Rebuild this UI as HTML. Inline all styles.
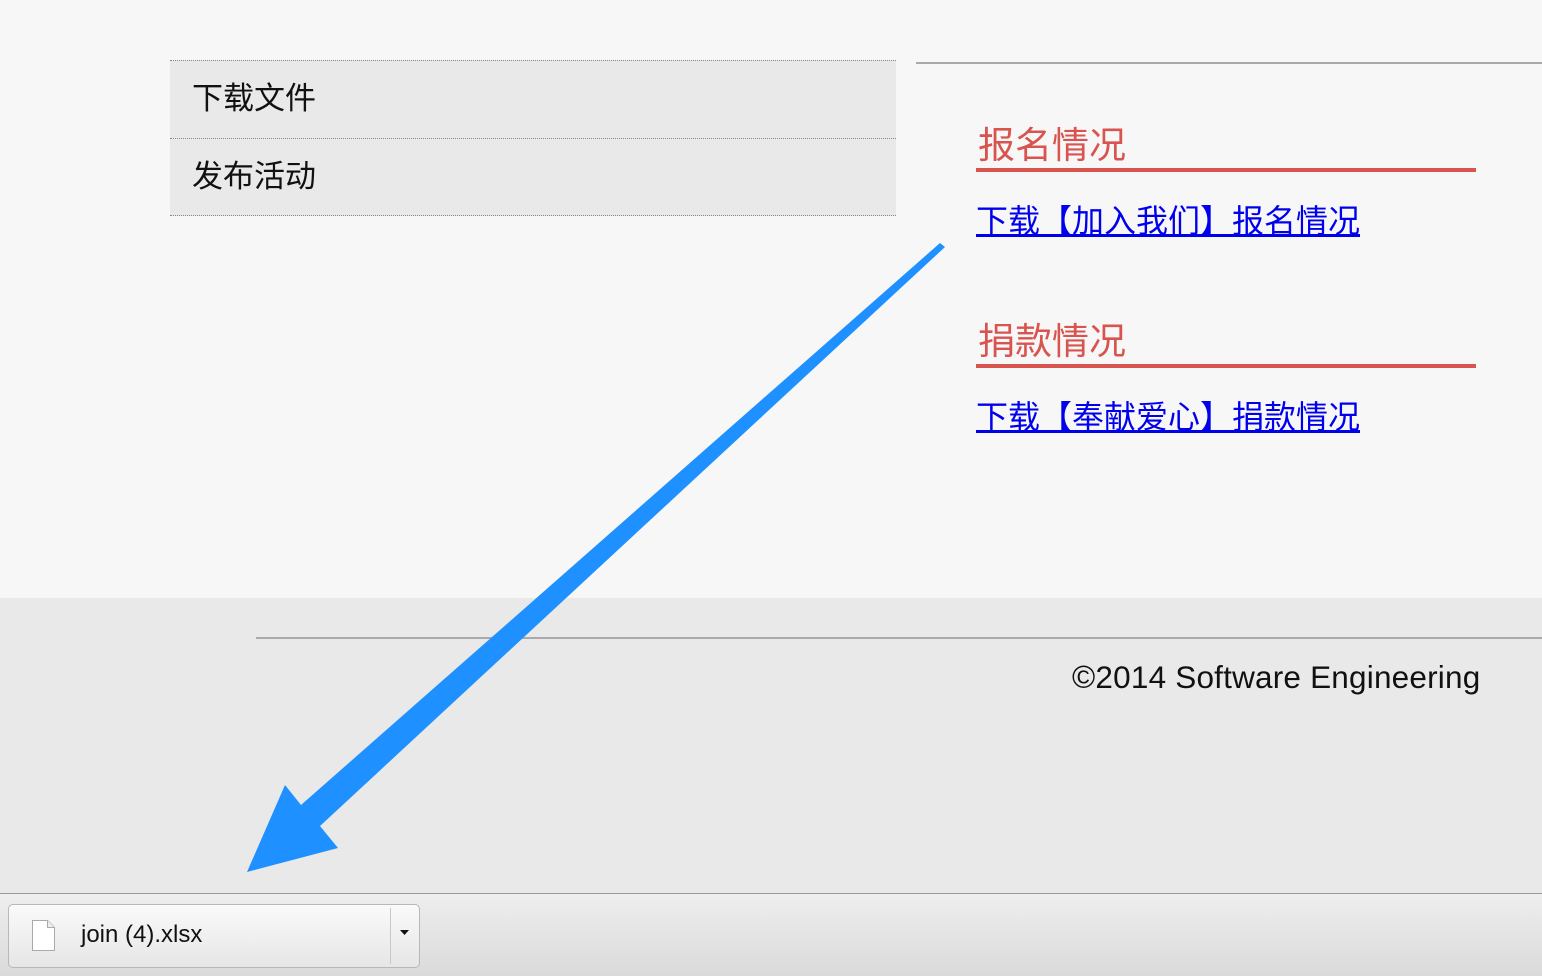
<!DOCTYPE html>
<html><head><meta charset="utf-8"><style>
body{margin:0;width:1542px;height:976px;overflow:hidden;background:#f7f7f7;font-family:"Liberation Sans","Noto Sans CJK SC",sans-serif;position:relative}
.abs{position:absolute}
.item{position:absolute;left:170px;width:726px;height:78px;background:#e9e9e9;border-top:1px dotted #888;font-size:31px;line-height:76px;color:#111;box-sizing:border-box;padding-left:22px}
.h{position:absolute;left:976px;width:498px;font-size:37px;color:#d9534f;line-height:40px;border-bottom:4px solid #d9534f;padding-left:2px;height:42px}
.l{position:absolute;left:976px;font-size:32px;letter-spacing:0px;color:#0000ee;text-decoration:underline;line-height:34px;white-space:nowrap}
</style></head><body>
<div class="item" style="top:60px">下载文件</div>
<div class="item" style="top:138px;height:78px;border-bottom:1px dotted #888">发布活动</div>
<div class="abs" style="left:916px;top:62px;width:626px;height:2px;background:#aaa"></div>
<div class="h" style="top:126px">报名情况</div>
<div class="l" style="top:204px">下载【加入我们】报名情况</div>
<div class="h" style="top:322px">捐款情况</div>
<div class="l" style="top:400px">下载【奉献爱心】捐款情况</div>
<div class="abs" style="left:0;top:598px;width:1542px;height:296px;background:#e9e9e9"></div>
<div class="abs" style="left:256px;top:637px;width:1286px;height:2px;background:#aaa"></div>
<div class="abs" style="left:1072px;top:659px;font-size:31.5px;color:#111;letter-spacing:0.2px">©2014 Software Engineering</div>
<div class="abs" style="left:0;top:893px;width:1542px;height:1px;background:#999"></div>
<div class="abs" style="left:0;top:894px;width:1542px;height:82px;background:linear-gradient(#eeeeee,#dadada)"></div>
<div class="abs" style="left:8px;top:904px;width:412px;height:64px;border:1px solid #b8b8b8;border-radius:5px;background:linear-gradient(#fafafa,#e6e6e6);box-sizing:border-box"></div>
<div class="abs" style="left:390px;top:908px;width:1px;height:56px;background:#c8c8c8"></div>
<svg class="abs" style="left:30px;top:918px" width="28" height="36"><path d="M2.5 2.5h15l7 7v23h-22z" fill="#fff" stroke="#aaa"/><path d="M17.5 2.5v7h7" fill="#eee" stroke="#aaa"/></svg>
<div class="abs" style="left:81px;top:921px;font-size:24px;color:#111">join (4).xlsx</div>
<svg class="abs" style="left:399px;top:929px" width="12" height="8"><path d="M1 1h9l-4.5 5z" fill="#111"/></svg>
<svg class="abs" style="left:0;top:0" width="1542" height="976"><polygon points="945,247 940,243 301,805 285,785 247,872 338,848 320,826" fill="#1e90ff"/></svg>
</body></html>
